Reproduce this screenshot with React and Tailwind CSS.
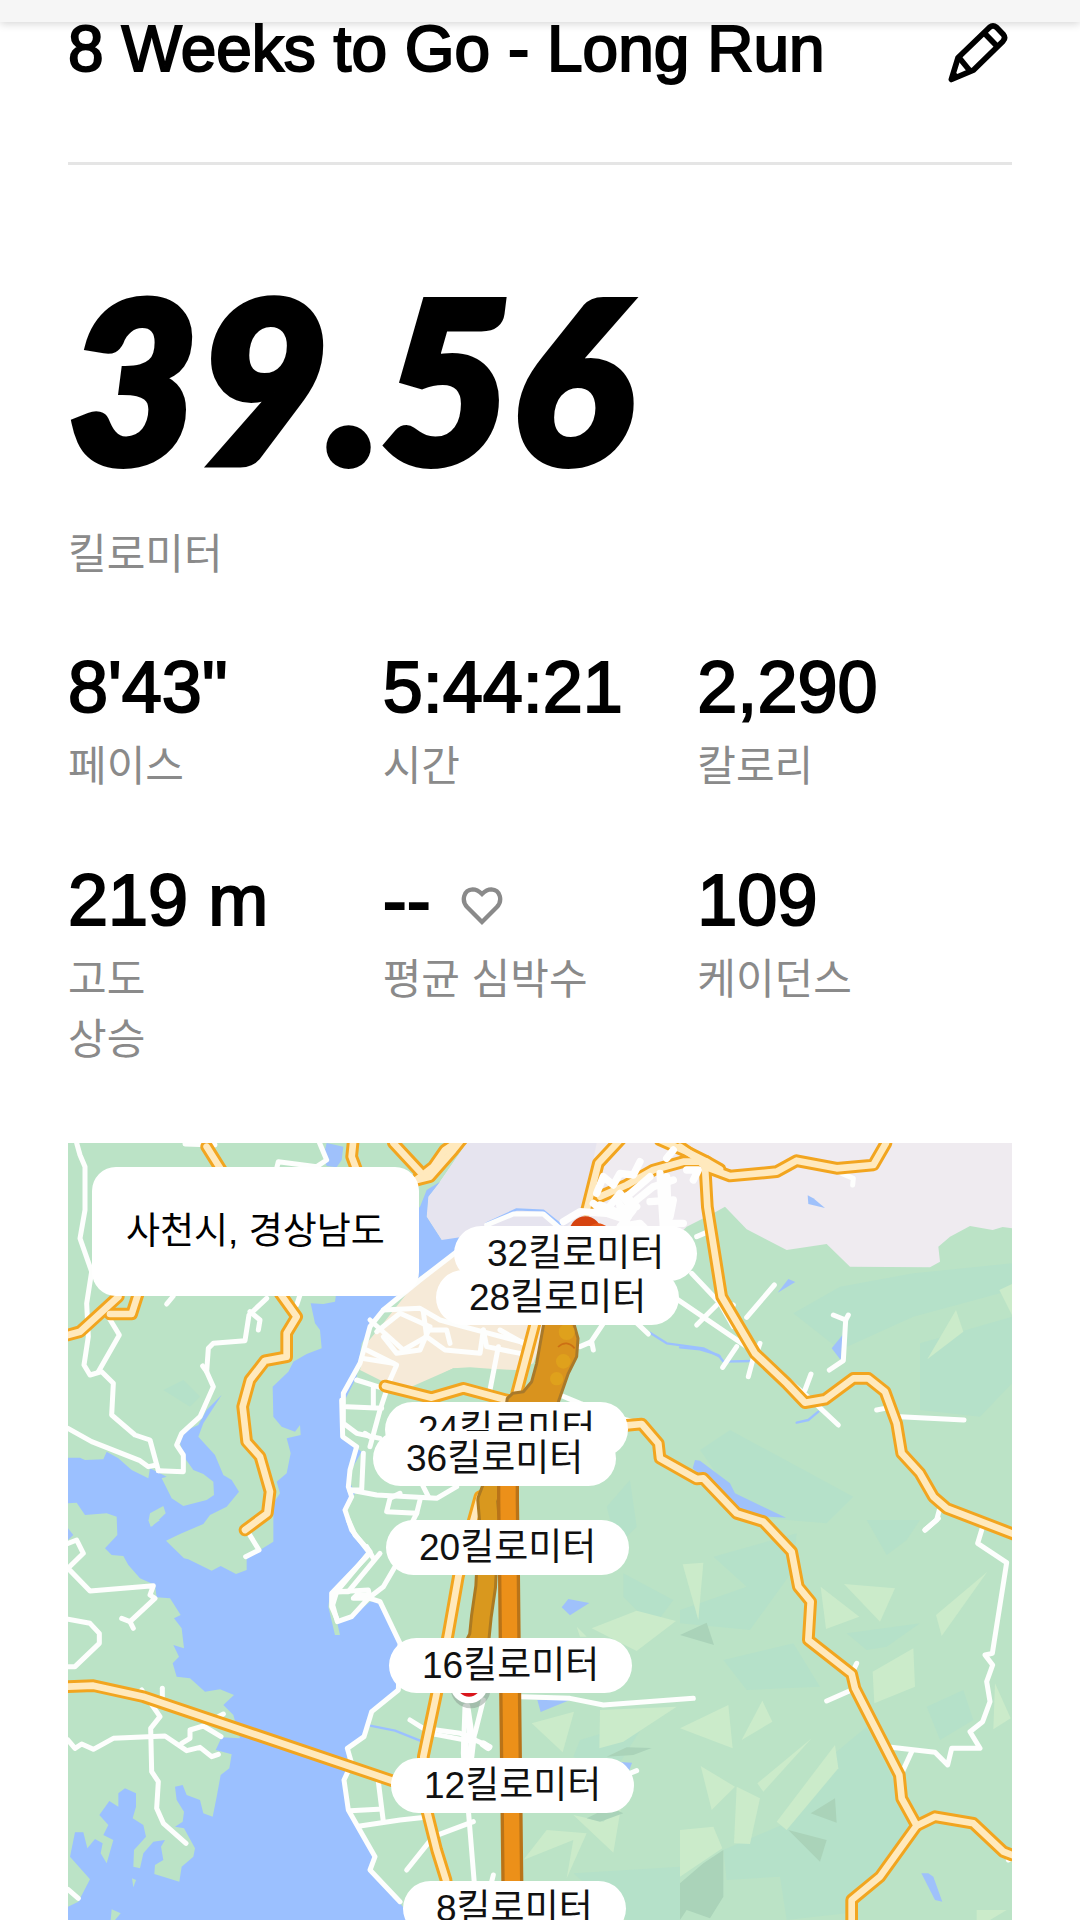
// Every map tile keeps its own local coordinates, `tile` shifts them onto the shared canvas
const tile = (dx, dy) => (pts) =>
  pts
    .split(' ')
    .map((p) => {
      const [x, y] = p.split(',').map(Number);
      return `${x + dx},${y + dy}`;
    })
    .join(' ');

const nw = tile(-24, -39);
const n = tile(1056, -39);
const ne = tile(1836, -39);
const mid = tile(756, 471);
const sw = tile(-24, 1131);
const s = tile(816, 1131);
const se = tile(1836, 1131);

const stats = [
  { value: `8'43"`, label: '페이스' },
  { value: '5:44:21', label: '시간' },
  { value: '2,290', label: '칼로리' },
  { value: '219 m', label: '고도 상승', narrow: true },
  { value: '--', label: '평균 심박수', heart: true },
  { value: '109', label: '케이던스' },
];

// x / y in the 944 x 777 map frame
const markers = [
  { label: '32킬로미터', x: 386, y: 83 },
  { label: '28킬로미터', x: 368, y: 127 },
  { label: '24킬로미터', x: 317, y: 259 },
  { label: '36킬로미터', x: 305, y: 288 },
  { label: '20킬로미터', x: 318, y: 377 },
  { label: '16킬로미터', x: 321, y: 495 },
  { label: '12킬로미터', x: 323, y: 615 },
  { label: '8킬로미터', x: 335, y: 738 },
];

const sea = [
  nw('830,480 825,515 790,522 752,520 765,580 780,600 785,655 740,672 700,695 685,725 638,770 640,860 665,890 705,905 720,885 722,915 680,925 692,970 680,1030 650,1055 660,1090 640,1120 640,1170'),
  sw('640,65 600,90 560,110 560,150 528,162 482,138 455,152 385,118 372,115 318,62 360,42 430,12'),
  nw('450,1155 500,1130 537,1085 515,1050 490,1035 465,975 415,920 430,880 485,795 440,840 415,885 370,905 360,940 375,985 400,1020 430,1032 460,1055 462,1095 440,1110 370,1128 335,1105 305,1045 320,1040 270,1015 265,1045 215,1020 175,985 140,965 130,988 75,990 60,983 24,983 24,1120 50,1118 75,1155 140,1150 170,1160'),
  sw('172,45 135,85 155,105 190,108 205,135 240,175 285,195 290,232 330,235 362,285 342,295 365,325 372,385 340,375 357,410 338,430 350,470 390,475 435,515 480,508 522,525 490,555 520,585 540,655 485,652 467,690 515,703 508,745 482,765 470,830 458,890 430,880 420,840 380,825 368,795 345,800 350,840 372,875 368,905 345,920 372,925 405,985 400,1010 365,1040 358,1085 283,1062 285,1035 310,1020 303,980 315,960 280,965 250,1000 240,1045 220,1040 222,990 258,950 250,915 218,895 228,860 228,820 195,805 175,820 175,860 148,843 118,885 145,915 130,945 160,960 140,1030 122,1000 128,970 105,957 82,985 70,937 45,937 30,1010 90,1078 55,1145 24,1160 24,1200 1060,1200 1020,1150 930,1055 945,1010 900,920 865,870 850,780 865,745 858,685 910,645 930,575 1010,510 1020,370 955,240 930,245 875,290 832,310 840,345 825,345 805,260 810,220 830,210 920,95 865,0'),
  nw('855,1150 885,1090 862,1040 905,965 850,925 850,820 890,740 905,640 940,580 1020,500'),
  n('0,440 110,365 130,320 65,330 20,260 25,200 60,155 20,180 0,230'),
].join(' ');

const lakes = [
  nw('800,39 850,50 845,90 830,112 800,108 790,80'),
  ne('383,196 400,205 435,234 385,222'),
  ne('293,488 325,447 346,456'),
  ne('455,655 490,612 482,690'),
  ne('38,1015 45,990 60,992 150,1060 165,1090 318,1163 190,1155 150,1120'),
  s('665,262 685,237 748,249 690,286'),
  s('592,540 690,540 640,560 602,576'),
  s('840,726 876,728 866,756 840,750'),
  se('724,1060 745,1060 760,1070 787,1145 765,1140'),
  sw('24,25 40,45 24,60'),
];

const islands = [
  nw('270,1150 310,1128 317,1150 275,1190 266,1170'),
  sw('265,0 300,0 272,20'),
  sw('216,1075 228,1080 220,1102'),
  sw('155,1168 182,1180 165,1200 152,1200'),
];

const streams = [
  n('200,280 290,238 370,242 420,282'),
  n('690,608 740,640 850,655 900,680'),
  ne('0,652 60,658 115,675 130,695 215,693'),
  ne('350,878 385,870 415,845'),
  s('90,617 165,632 240,662'),
];

const city = [
  n('60,155 140,39 1900,39 1900,310 1748,291 1718,300 1650,288 1590,320 1555,350 1560,395 1530,412 1290,410 1220,342 1100,360 980,298 915,230 880,250 800,290 760,330 400,330 130,330 65,330 20,260 25,200'),
];

const beach = [
  n('110,365 200,400 390,560 340,700 290,720 100,715 0,765 -50,785 -180,720 -160,640 -110,580 0,440'),
];

const teal = [
  ne('340,550 480,470 700,430 996,400 996,480 700,560 480,660'),
  ne('150,900 520,1100 440,1180 200,1160 60,960'),
  ne('720,640 996,560 996,760 900,860 720,840'),
  se('100,110 350,40 340,150 210,330 0,310 0,270 200,200'),
  se('130,420 340,370 420,500 200,510'),
  se('500,340 720,310 620,380 560,390'),
  se('740,560 850,510 880,600 780,660'),
  se('560,0 720,0 680,60 620,105'),
  se('440,720 560,620 650,800 700,900 600,1070 500,1180 320,1200 300,1070 140,1080 130,990 340,900'),
  s('720,660 920,600 820,760 700,710'),
  s('850,160 1000,240 940,320 850,230'),
  s('700,1060 1020,1040 1020,1200 860,1200'),
  mid('860,620 930,540 950,680 890,740'),
  nw('310,780 370,750 420,800 390,830'),
];

const dark = [
  se('0,345 80,308 102,375'),
  se('392,880 465,835 470,908'),
  se('325,930 440,960 420,1025'),
  se('0,1090 70,1030 130,990 130,1130 90,1195 20,1170 0,1200'),
  s('800,710 860,682 935,684 880,705'),
  s('740,895 810,860 850,880 780,905'),
];

const pale = [
  s('755,325 890,272 1008,303 890,393'),
  s('575,610 702,575 668,697'),
  s('780,570 1010,560 850,665 778,685'),
  s('700,885 790,905 845,850 820,998'),
  s('550,1020 620,930 740,940 680,1075 700,960'),
  s('710,320 740,350 720,350'),
  se('8,133 70,128 55,300'),
  se('422,200 538,290 438,327'),
  se('492,192 645,205 600,305'),
  se('768,285 922,155 785,348'),
  se('578,455 700,385 705,500 583,550'),
  se('0,625 145,555 158,685'),
  se('185,660 247,542 277,605'),
  se('232,790 395,655 250,815'),
  se('290,905 465,675 475,745 320,930'),
  se('62,738 165,800 95,870'),
  se('170,800 240,835 210,972 162,970'),
  se('0,930 100,920 127,985 0,1070'),
  se('945,490 992,595 940,628'),
  se('890,1170 980,1170 930,1200 890,1200'),
  ne('742,688 828,540 850,605'),
  ne('958,480 996,462 996,555'),
];

const highways = [
  n('-24,160 40,110 75,60 135,20'),
  n('-10,150 30,140 100,60 140,10'),
  nw('1000,39 1080,125'),
  nw('440,50 490,130'),
  nw('880,30 875,80 890,120'),
  nw('24,615 60,605 175,500'),
  nw('150,552 215,552 235,490'),
  nw('660,490 710,560 680,610 680,680 615,692 570,750 548,830 560,935 600,980 630,1085 622,1150 555,1200'),
  n('500,240 520,160 535,100 600,30'),
  n('540,200 620,165 700,120 790,95 860,95 900,118'),
  n('720,30 800,65 860,95'),
  ne('0,50 50,85 75,110 150,138 290,125 350,92 470,115 580,105 618,39'),
  ne('75,110 82,230 125,500 225,670 320,760 375,818 435,808 520,745 565,745 615,785 650,880 665,970 720,1030 760,1100 800,1135 1000,1212'),
  mid('195,258 335,293 430,265 560,300 620,310'),
  mid('645,70 590,280'),
  [
    mid('920,376 965,372 1015,430 1020,475 1130,537'),
    ne('70,1045 170,1150'),
    se('250,5 335,95 355,200 392,245 385,360 515,462 525,505 658,765 665,835 710,917'),
  ].join(' '),
  se('996,1005 970,995 880,910 765,890 710,917 600,1070 515,1140 515,1220'),
  [
    mid('480,590 455,680'),
    s('355,170 325,340 290,520 250,710 255,850 290,990 318,1080 335,1210'),
  ].join(' '),
  sw('24,500 100,497 250,530 990,780 1020,790'),
];

const streets = [
  nw('50,39 60,75 75,110 75,240 60,325 95,425 80,520 85,620 72,705 90,735 125,725 160,760 155,855 225,915 270,930 295,1022'),
  nw('145,560 178,615 115,725'),
  nw('24,895 95,935 240,992 265,1010 290,1005'),
  nw('295,1022 370,1025 370,975 350,945 365,910 420,860 460,770 440,725 445,655 460,640 555,632 567,555 620,505'),
  nw('440,725 428,708'),
  nw('570,545 600,570 595,600'),
  nw('710,525 720,495'),
  nw('775,30 800,90 770,110 655,95 650,115'),
  nw('375,42 465,45'),
  nw('340,498 320,522'),
  n('110,365 0,450 -110,540 -150,590 -180,700 -230,790 -230,880 -190,910 -120,925'),
  n('-110,540 0,535 60,570 130,590 320,640'),
  n('-150,570 -50,660 20,620 10,545'),
  n('20,620 75,660 180,670 190,600'),
  n('30,600 80,600 90,640'),
  n('190,600 200,650 300,670'),
  n('240,600 320,645'),
  n('235,650 210,780'),
  mid('140,150 230,195 210,240 180,330 150,440'),
  mid('125,175 220,190'),
  mid('170,95 240,40 330,80 300,150 230,160 190,110'),
  mid('110,240 190,265'),
  mid('80,320 185,325'),
  mid('160,260 160,320'),
  mid('135,400 150,410'),
  mid('130,460 125,570 90,570'),
  mid('65,300 68,410 110,440 90,510 85,560 95,590 75,630 95,690 150,760 35,880 35,920 50,955'),
  mid('90,570 170,585 350,595 410,560'),
  mid('240,580 210,595 200,635 290,640 300,600'),
  mid('300,540 325,590'),
  mid('290,640 275,670'),
  n('200,285 280,252 370,252 420,295'),
  n('510,640 550,580'),
  n('480,650 515,635 520,660'),
  n('620,550 685,612'),
  n('760,500 980,650 1005,665 985,740'),
  n('815,430 900,520 940,590'),
  n('830,320 865,305'),
  n('420,795 480,820 620,870 660,880'),
  n('830,585 890,525'),
  ne('200,562 283,465'),
  ne('170,650 128,712'),
  ne('460,555 497,570 505,555'),
  ne('497,570 490,692 448,720'),
  ne('330,755 400,815 475,885'),
  ne('375,780 393,732'),
  ne('590,840 630,832'),
  ne('660,860 852,870'),
  ne('778,1140 770,1170 735,1200'),
  ne('485,130 520,145 518,165'),
  ne('150,540 160,525'),
  ne('235,655 240,640'),
  sw('865,0 885,45 930,95 830,215 818,255 832,305 875,290 925,235 880,235 890,225 930,225'),
  sw('960,100 865,215 835,215'),
  sw('920,80 940,115'),
  sw('835,215 925,210 930,235'),
  sw('925,235 970,200 1005,140'),
  sw('930,235 960,245 1020,370 1015,510 935,575 912,650 862,685 875,730 852,780 865,870 945,1010 930,1050 1020,1145'),
  sw('870,872 955,868'),
  sw('900,918 1020,900 1110,890'),
  sw('955,785 970,905'),
  sw('560,30 597,90 557,110'),
  sw('24,70 50,60 70,100 24,145 90,213 280,197 270,225 285,235 210,305 220,325'),
  sw('185,295 210,305'),
  sw('24,298 90,310 118,340 118,370 45,440 24,440'),
  sw('24,660 45,685 65,672 100,688 160,655 315,648 380,692 420,682 455,710 475,703'),
  sw('245,510 300,590 272,625 275,755 295,785 290,865 310,910 378,970'),
  sw('365,670 390,655 390,630 430,618 483,650'),
  sw('307,505 307,530'),
  sw('475,590 490,582'),
  sw('24,1108 55,1135'),
  s('545,530 690,535 790,555 1060,535'),
  s('210,600 250,625 360,640 450,680'),
  s('270,640 400,665'),
  s('375,560 370,700 385,870 403,1090'),
  s('200,1050 280,950 400,905'),
  s('430,540 405,640'),
  s('865,762 890,752'),
  s('460,1065 455,1085'),
  se('530,430 518,455'),
  se('440,543 520,508'),
  se('735,30 775,-5'),
  se('908,20 893,70 980,128 937,400 915,405 938,435 920,485 930,545 908,605 870,635 900,685 815,685 803,735 765,697 620,680'),
  se('695,695 665,760'),
  se('985,1020 996,1015'),
];

// dense town streets close to the start point
const town = [
  n('530,190 550,140 580,165 600,130 640,135 660,95'),
  n('560,240 600,190 640,240 600,290 660,280 680,300'),
  n('540,225 600,250 700,170 760,150'),
  n('590,210 625,260 600,230'),
  n('690,215 760,210 750,260'),
  n('720,130 730,290'),
  n('740,140 745,280 790,280'),
  n('430,275 480,245 560,250'),
  n('520,220 560,250 620,270'),
  n('650,230 620,200 690,140'),
  n('740,85 760,60'),
  n('800,120 835,120 820,150'),
  s('380,560 392,640 375,660 375,710'),
  s('400,640 392,710'),
  s('430,672 445,682'),
];

const mainRoute = [[mid('564,500 564,600'), s('507,165 511,560 517,1083 518,1230')].join(' ')];
const sideRoute = [[mid('530,530 503,600 509,670 500,800'), s('437,200 424,290 418,350 400,385')].join(' ')];

function Lines({ items, stroke, width }) {
  return (
    <g fill="none" stroke={stroke} strokeWidth={width} strokeLinejoin="round" strokeLinecap="round">
      {items.map((points, i) => <polyline key={i} points={points} />)}
    </g>
  );
}

function Areas({ items, fill }) {
  return (
    <g fill={fill}>
      {items.map((points, i) => <polygon key={i} points={points} />)}
    </g>
  );
}

function RouteMap() {
  return (
    <svg viewBox="0 0 2832 2331" className="block w-full" role="img" aria-label="러닝 경로 지도">
      <rect width="2832" height="2331" fill="#bbe3c6" />
      <Areas items={teal} fill="#b5e1c9" />
      <Areas items={pale} fill="#cbebca" />
      <Areas items={dark} fill="#aad3b9" />
      <Areas items={city} fill="#efebf0" />
      <polygon points={n('60,155 140,39 530,39 490,240 400,330 130,330 65,330 20,260 25,200')} fill="#e6e4ef" />
      <Areas items={beach} fill="#f6ead8" />
      <polygon points={n('-60,785 100,715 150,712 290,722 270,790')} fill="#bbe3c6" />
      <polygon points={sea} fill="#9bc0ff" />
      <Areas items={lakes} fill="#9fc1fb" />
      <Areas items={islands} fill="#bbe3c6" />
      <Lines items={streams} stroke="#9bc0ff" width={7} />

      <Lines items={streets} stroke="#fdfefd" width={15} />
      <Lines items={highways} stroke="#f2a51f" width={38} />
      <Lines items={highways} stroke="#ffe9bd" width={20} />
      <Lines items={town} stroke="#fefefe" width={22} />

      {/* route */}
      <circle cx="1552" cy="268" r="48" fill="#d6430f" />
      <circle cx="1590" cy="277" r="36" fill="#e5561a" />
      <polygon
        points={n('375,560 460,575 474,625 470,680 445,730 410,830 258,830 262,805 278,790 310,785 335,755 350,700')}
        fill="#d9931e"
        stroke="#a9792a"
        strokeWidth="9"
        strokeLinejoin="round"
      />
      <g fill="#dfa11c">
        <circle cx="1496" cy="567" r="24" />
        <circle cx="1486" cy="655" r="22" />
        <circle cx="1466" cy="707" r="20" />
      </g>
      <path d="M1470 612q26-24 50 4" fill="none" stroke="#cc6f14" strokeWidth="5" />
      <Lines items={sideRoute} stroke="#ac7a22" width={68} />
      <Lines items={sideRoute} stroke="#d9981e" width={50} />
      <Lines items={mainRoute} stroke="#b97318" width={66} />
      <Lines items={mainRoute} stroke="#ec9019" width={46} />

      {/* finish pin */}
      <circle cx="1208" cy="1636" r="60" fill="#8a9a90" opacity="0.5" />
      <circle cx="1203" cy="1624" r="57" fill="#fff" />
      <circle cx="1203" cy="1624" r="37" fill="#d9151b" />
    </svg>
  );
}

function PencilIcon() {
  return (
    <svg viewBox="43 36 180 182" className="w-[60px] h-[61px]" fill="none" stroke="#000" strokeWidth="17" strokeLinejoin="round">
      <path d="M53 208L73 143L168 51Q178 43 188 51L209 73Q217 83 208 93L119 180Z" />
      <path d="M151 68L191 109M76 142L108 181" />
      <path d="M53 208L60 186L76 199Z" fill="#000" strokeWidth="6" />
    </svg>
  );
}

function HeartIcon() {
  return (
    <svg viewBox="66 52 126 120" className="w-[42px] h-[40px] mt-3" fill="none" stroke="#8a8a8a" strokeWidth="13">
      <path d="M129 160L85 116C66 96 74 63 101 62C114 62 122 69 129 76C136 69 144 62 157 62C184 63 192 96 173 116Z" />
    </svg>
  );
}

export default function App() {
  return (
    <div className="min-h-screen bg-white text-black font-['Liberation_Sans','Noto_Sans_CJK_KR',sans-serif]">
      <div className="h-[22px] bg-[#f6f6f6] shadow-[0_2px_8px_rgba(0,0,0,0.16)]" />

      <main className="px-[68px]">
        <header className="flex items-start justify-between h-[143px] border-b-3 border-[#e5e5e5]">
          <h1 className="text-[64px] leading-[54px] [-webkit-text-stroke:2px_black]">8 Weeks to Go - Long Run</h1>
          <button type="button" aria-label="제목 편집" className="mr-1">
            <PencilIcon />
          </button>
        </header>

        <section className="pt-[96px]">
          <p className="font-['Lato',sans-serif] font-black italic text-[224px] leading-[232px] [-webkit-text-stroke:8px_black]">39.56</p>
          <p className="mt-[32px] text-[42px] leading-[60px] text-[#8a8a8a]">킬로미터</p>
        </section>

        <dl className="grid grid-cols-3 mt-[62px] gap-y-[63px]">
          {stats.map((stat) => (
            <div key={stat.label} className="flex flex-col gap-[10px]">
              <dd className="flex items-center gap-[30px] text-[72px] leading-[80px] whitespace-nowrap [-webkit-text-stroke:2px_black]">
                {stat.value}
                {stat.heart && <HeartIcon />}
              </dd>
              <dt className={`order-last text-[42px] leading-[60px] text-[#8a8a8a] ${stat.narrow ? 'w-[100px]' : ''}`}>
                {stat.label}
              </dt>
            </div>
          ))}
        </dl>

        <section className="relative mt-[73px] overflow-hidden">
          <RouteMap />

          {markers.map((m) => (
            <span
              key={m.label}
              className="absolute px-[33px] rounded-full bg-white text-[#111] text-[37px] leading-[55px] whitespace-nowrap"
              style={{ left: `${(m.x / 944) * 100}%`, top: `${(m.y / 777) * 100}%` }}
            >
              {m.label}
            </span>
          ))}

          <p className="absolute left-6 top-6 px-[34px] rounded-3xl bg-white text-[37px] leading-[129px] whitespace-nowrap">
            사천시, 경상남도
          </p>
        </section>
      </main>
    </div>
  );
}
